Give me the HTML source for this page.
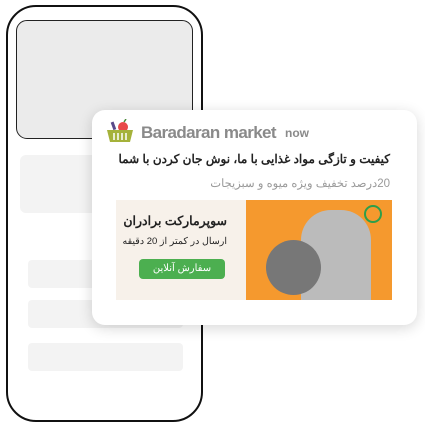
<!DOCTYPE html><html><head><meta charset="utf-8"><style>
body{margin:0;width:425px;height:431px;background:#fff;position:relative;overflow:hidden;font-family:"Liberation Sans","Noto Sans CJK SC",sans-serif}
.a{position:absolute}
</style></head><body>
<div class="a" style="left:6px;top:5px;width:193px;height:413px;border:2px solid #111;border-radius:30px"></div>
<div class="a" style="left:16px;top:20px;width:175px;height:117px;border:1px solid #222;border-radius:11px;background:#ebebeb"></div>
<div class="a" style="left:20px;top:155px;width:190px;height:58px;background:#f3f3f3;border-radius:6px"></div>
<div class="a" style="left:28px;top:260px;width:155px;height:28px;background:#f3f3f3;border-radius:4px"></div>
<div class="a" style="left:28px;top:300px;width:155px;height:28px;background:#f3f3f3;border-radius:4px"></div>
<div class="a" style="left:28px;top:343px;width:155px;height:28px;background:#f3f3f3;border-radius:4px"></div>
<div class="a" style="left:92px;top:110px;width:325px;height:215px;background:#fff;border-radius:13px;box-shadow:0 3px 14px rgba(0,0,0,.16)"></div>
<svg class="a" style="left:106px;top:119px" width="28" height="24" viewBox="0 0 28 24">
<rect x="6" y="3" width="3" height="8" fill="#5a4a8a" transform="rotate(-20 7 7)"/>
<circle cx="17" cy="8" r="5" fill="#e84a4a"/><path d="M18 3l2-3" stroke="#4a8a3a" stroke-width="1.5"/>
<path d="M1 11h26l-3 12H4z" fill="#a5b23a"/><path d="M8 14v7M12 14v7M16 14v7M20 14v7" stroke="#fff" stroke-width="1.5"/>
</svg>
<div class="a" style="left:141px;top:123px;font-size:17px;font-weight:bold;color:#8a8a8a;letter-spacing:-.6px">Baradaran market</div>
<div class="a" style="left:285px;top:126px;font-size:12px;font-weight:bold;color:#8a8a8a">now</div>
<div class="a" dir="rtl" style="right:35px;top:152px;font-size:12px;font-weight:bold;color:#222;white-space:nowrap">کیفیت و تازگی مواد غذایی با ما، نوش جان کردن با شما</div>
<div class="a" dir="rtl" style="right:35px;top:176px;font-size:11.5px;color:#999;white-space:nowrap">20درصد تخفیف ویژه میوه و سبزیجات</div>
<div class="a" style="left:116px;top:200px;width:276px;height:100px;background:#f7f1ea;overflow:hidden">
<div class="a" style="left:130px;top:0;width:146px;height:100px;background:#f5992e"></div>
<div class="a" style="left:185px;top:10px;width:70px;height:90px;background:#bbb;border-radius:30px 30px 0 0"></div>
<div class="a" style="left:150px;top:40px;width:55px;height:55px;background:#777;border-radius:50%"></div>
<div class="a" style="left:248px;top:5px;width:14px;height:14px;border:2px solid #2e9e4a;border-radius:50%"></div>
</div>
<div class="a" dir="rtl" style="right:198px;top:213px;font-size:12.5px;font-weight:bold;color:#222;white-space:nowrap">سوپرمارکت برادران</div>
<div class="a" dir="rtl" style="right:198px;top:236px;font-size:9.5px;color:#222;white-space:nowrap">ارسال در کمتر از 20 دقیقه</div>
<div class="a" style="left:139px;top:259px;width:86px;height:20px;background:#4caf50;border-radius:4px;color:#fff;font-size:10px;text-align:center;line-height:20px">سفارش آنلاین</div>
</body></html>
